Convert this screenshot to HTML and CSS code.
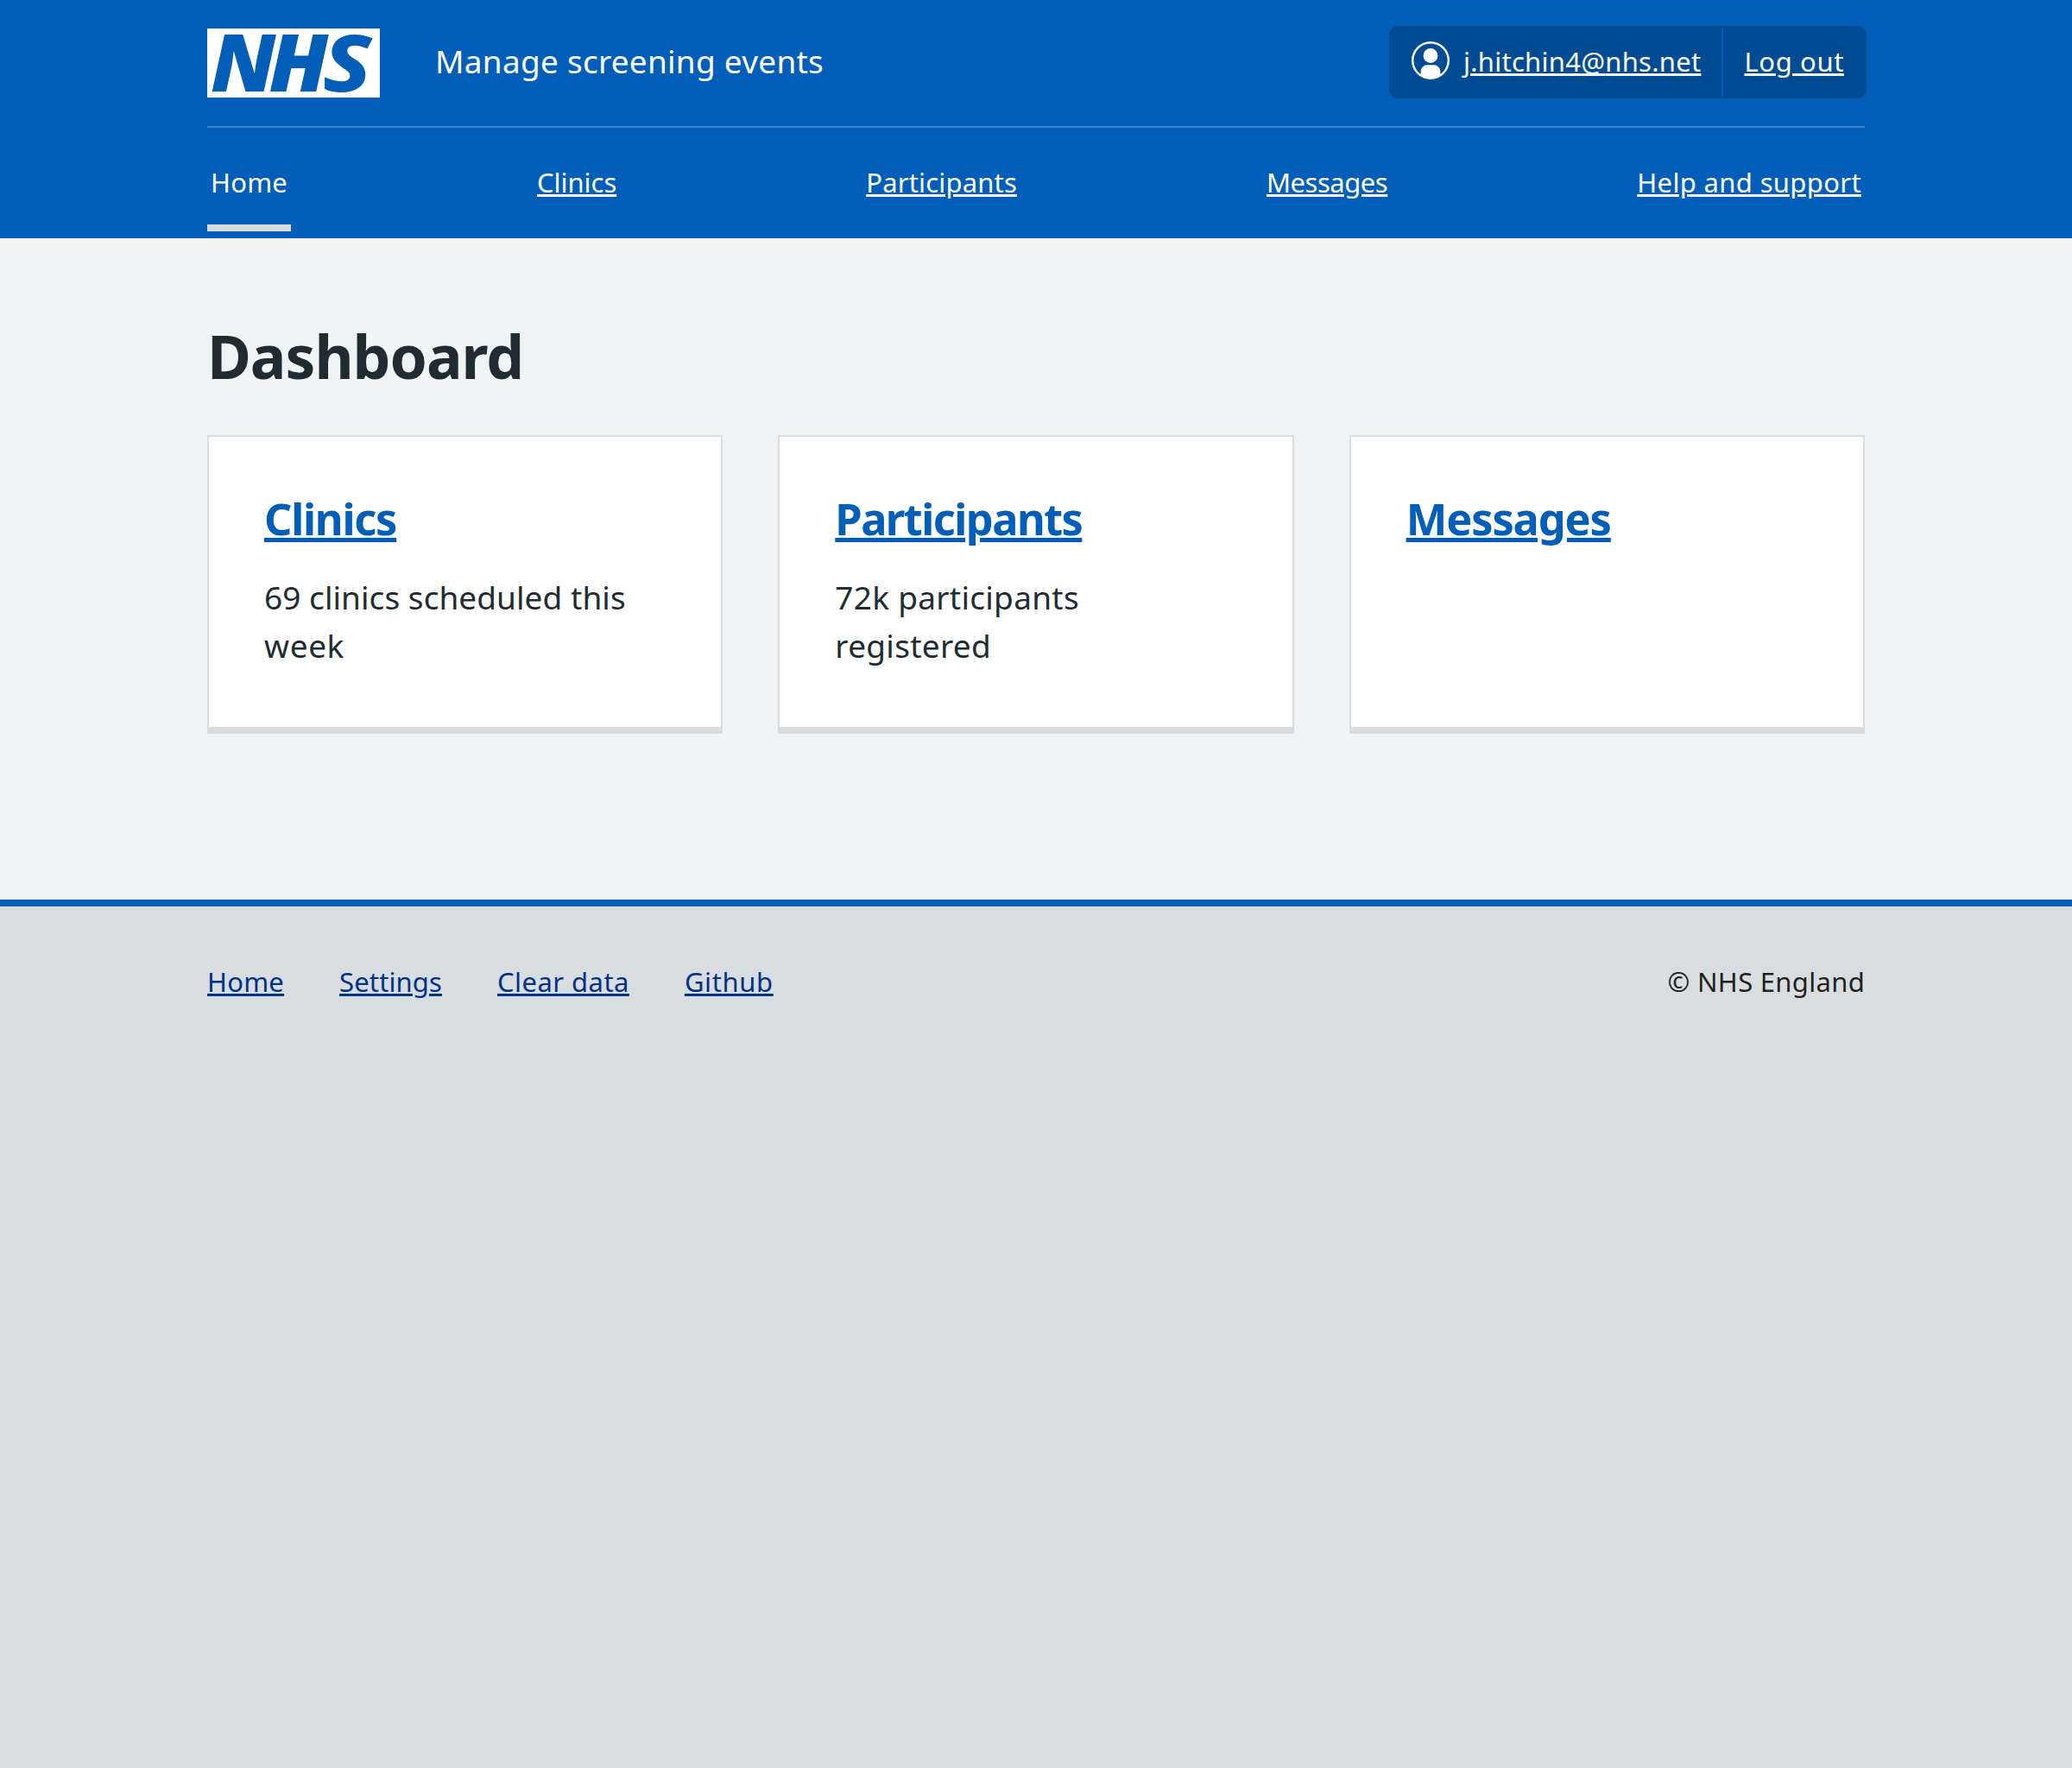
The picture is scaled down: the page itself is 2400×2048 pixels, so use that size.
FILE: index.html
```html
<!DOCTYPE html>
<html lang="en">
<head>
<meta charset="utf-8">
<title>Dashboard - Manage screening events</title>
<link rel="stylesheet" href="styles.css">
</head>
<body>
<header class="header">
  <div class="header-top">
    <svg class="logo" viewBox="0 0 200 80" width="200" height="80" role="img" aria-label="NHS">
      <rect width="200" height="80" fill="#fff"/>
      <g class="logo-text">
        <text transform="translate(4.2 72.7) scale(1.04 1)">N</text>
        <text transform="translate(71.5 72.7) scale(1.053 1)">H</text>
        <text class="logo-s" transform="translate(133.9 72.7) scale(1.148 1)">S</text>
      </g>
    </svg>
    <span class="service">Manage screening events</span>
    <div class="account">
      <div class="account-item">
        <svg class="avatar" viewBox="0 0 44 44" width="44" height="44" aria-hidden="true">
          <path fill="#fff" fill-rule="evenodd" d="M22 0a22 22 0 1 1 0 44a22 22 0 0 1 0-44zM22 2.500a19.500 19.500 0 0 0-11.300 35.400v-3.400a7.200 7.200 0 0 1 7.200-7.200h8.200a7.200 7.200 0 0 1 7.200 7.200v3.400A19.500 19.500 0 0 0 22 2.500z"/>
          <circle cx="22" cy="16.500" r="8.400" fill="#fff"/>
        </svg>
        <a class="link email" href="#">j.hitchin4<span class="at">@</span>nhs.net</a>
      </div>
      <div class="account-item"><a class="link logout" href="#">Log out</a></div>
    </div>
  </div>
  <nav class="nav">
    <a class="nav-item active" href="#">Home</a>
    <a class="nav-item link nav-clinics" href="#">Clinics</a>
    <a class="nav-item link nav-participants" href="#">Participants</a>
    <a class="nav-item link nav-messages" href="#">Messages</a>
    <a class="nav-item link nav-help" href="#">Help and support</a>
  </nav>
</header>
<main class="main">
  <h1 class="title">Dashboard</h1>
  <div class="cards">
    <section class="card">
      <h2 class="card-title clinics"><a href="#">Clinics</a></h2>
      <p class="card-text scheduled">69 clinics scheduled this<br><span class="week">week</span></p>
    </section>
    <section class="card">
      <h2 class="card-title participants"><a href="#">Participants</a></h2>
      <p class="card-text">72k participants<br>registered</p>
    </section>
    <section class="card">
      <h2 class="card-title messages"><a href="#">Messages</a></h2>
    </section>
  </div>
</main>
<footer class="footer">
  <div class="footer-inner">
    <a class="link foot-home" href="#">Home</a>
    <a class="link foot-settings" href="#">Settings</a>
    <a class="link foot-clear" href="#">Clear data</a>
    <a class="link foot-github" href="#">Github</a>
    <span class="copyright">© NHS England</span>
  </div>
</footer>
</body>
</html>
```
FILE: styles.css
```css
* { box-sizing: border-box; }

body {
  margin: 0;
  background: #d8dde0;
  color: #212b32;
  font-family: "Noto Sans", "Open Sans", sans-serif;
  font-size: 31px;
}

a { color: inherit; text-decoration: none; }

.link {
  text-decoration: underline;
  text-decoration-thickness: 3px;
  text-underline-offset: 2px;
}

.header {
  padding: 0 240px 8px;
  background: #005eb8;
  color: #fff;
}

.header-top {
  display: flex;
  align-items: flex-start;
  height: 148px;
  padding-top: 30px;
  border-bottom: 2px solid rgba(255, 255, 255, 0.25);
}

.logo {
  flex: none;
  margin-top: 3px;
  overflow: visible;
}

.logo-text {
  fill: #005eb8;
  font-size: 91.5px;
  font-style: italic;
  font-weight: 900;
}

.logo-s { font-weight: 800; }

.service {
  margin-left: 64px;
  font-size: 37px;
  line-height: 82px;
  letter-spacing: 0.25px;
}

.account {
  display: flex;
  height: 84px;
  margin: 0 -2px 0 auto;
  border: 2px solid #004b93;
  border-radius: 10px;
  background: #004b93;
}

.account-item {
  display: flex;
  gap: 16px;
  padding: 0 24px;
  line-height: 78px;
}

.account-item + .account-item { border-left: 2px solid #005eb8; }

.avatar { margin-top: 16px; }
.email { letter-spacing: 0.26px; }
.at { text-decoration-skip-ink: none; }
.logout { letter-spacing: 0.62px; }

.nav { display: flex; justify-content: space-between; }

.nav-item {
  padding: 32px 4px 18px;
  border-bottom: 8px solid transparent;
  line-height: 62px;
  letter-spacing: 0.2px;
}

.active { border-bottom-color: #d8dde0; }
.nav-clinics { letter-spacing: -0.04px; }
.nav-participants { letter-spacing: 0.17px; }
.nav-messages { letter-spacing: -0.47px; }
.nav-help { letter-spacing: 0.35px; }

.main { padding: 94px 240px 192px; background: #f0f4f5; }

.title {
  margin: 0 0 50px;
  font-size: 69.5px;
  font-weight: 700;
  line-height: 84px;
  letter-spacing: -1px;
}

.cards {
  display: grid;
  grid-template-columns: repeat(3, 1fr);
  gap: 64px;
}

.card {
  padding: 64px 64px 66px;
  border: 2px solid #d8dde0;
  border-bottom-width: 8px;
  background: #fff;
}

.card-title {
  margin: 0 0 33px;
  color: #005eb8;
  font-size: 50.5px;
  font-weight: 700;
  line-height: 61px;
}

.card-title a {
  text-decoration: underline;
  text-decoration-thickness: 5px;
  text-underline-offset: 3px;
}

.clinics { letter-spacing: -1.25px; }
.participants { letter-spacing: -1.55px; }
.messages { letter-spacing: -1.13px; }

.card-text {
  margin: 0;
  font-size: 37px;
  line-height: 56px;
  letter-spacing: 0.28px;
}

.scheduled { letter-spacing: 0.05px; }
.week { letter-spacing: 0.59px; }

.footer {
  padding: 63px 240px 40px;
  border-top: 8px solid #005eb8;
  color: #003087;
}

.footer-inner { display: flex; gap: 64px; line-height: 48px; }
.foot-home { letter-spacing: 0.22px; }
.foot-settings { letter-spacing: 0.12px; }
.foot-clear { letter-spacing: 0.45px; }
.foot-github { letter-spacing: 0.63px; }

.copyright {
  margin-left: auto;
  color: #231f20;
  letter-spacing: 0.3px;
}
```
